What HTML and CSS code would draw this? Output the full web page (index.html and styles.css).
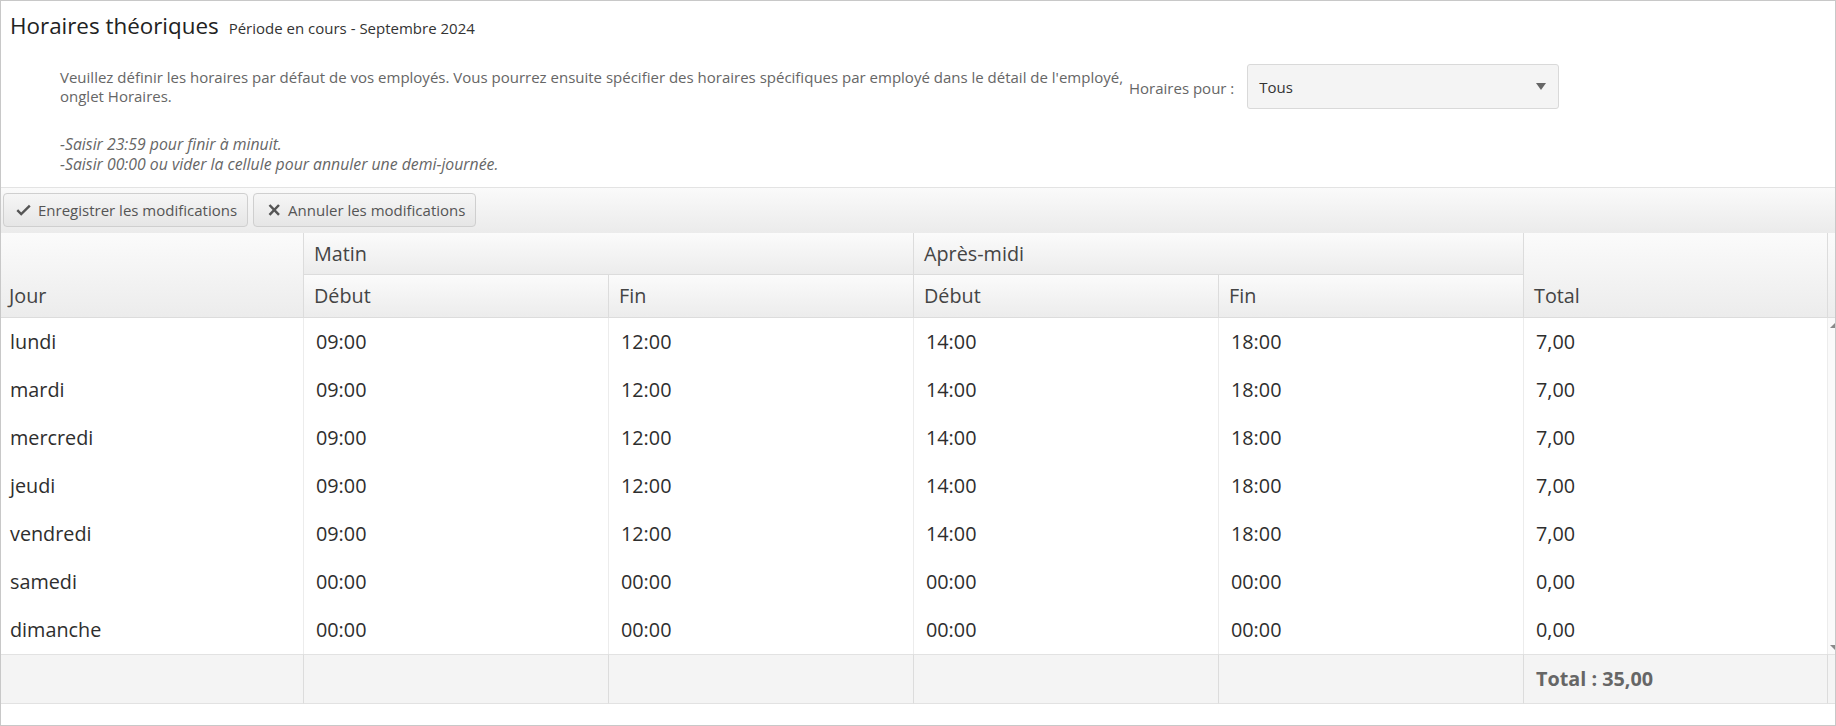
FILE: index.html
```html
<!DOCTYPE html>
<html lang="fr">
<head>
<meta charset="utf-8">
<title>Horaires théoriques</title>
<link rel="stylesheet" href="styles.css">
</head>
<body>
<div class="page">
  <header class="title-bar">
    <h1 class="title">Horaires théoriques</h1>
    <span class="period">Période en cours - Septembre 2024</span>
  </header>

  <div class="intro">
    <p class="desc">Veuillez définir les horaires par défaut de vos employés. Vous pourrez ensuite spécifier des horaires spécifiques par employé dans le détail de l'employé, onglet Horaires.</p>
    <span class="for-label">Horaires pour :</span>
    <div class="select">
      <span class="select-value">Tous</span>
      <svg class="select-arrow" width="10" height="7" viewBox="0 0 10 7"><polygon points="0,0 10,0 5,7" fill="#666"/></svg>
    </div>
  </div>

  <div class="notes">
    <p>-Saisir 23:59 pour finir à minuit.</p>
    <p>-Saisir 00:00 ou vider la cellule pour annuler une demi-journée.</p>
  </div>

  <div class="toolbar">
    <button class="btn" type="button">
      <svg class="ico" width="15" height="12" viewBox="0 0 15 12"><polyline points="1.3,6.2 5.2,10 13.8,1.6" fill="none" stroke="#555" stroke-width="2.4"/></svg>
      Enregistrer les modifications
    </button>
    <button class="btn btn-cancel" type="button">
      <svg class="ico" width="13" height="12" viewBox="0 0 13 12"><path d="M1.5 1 L11 10.8 M11 1 L1.5 10.8" fill="none" stroke="#555" stroke-width="2.5"/></svg>
      Annuler les modifications
    </button>
  </div>

  <div class="grid-wrap">
    <table class="grid">
      <colgroup>
        <col class="c-first"><col class="c-mid"><col class="c-mid"><col class="c-mid"><col class="c-mid"><col class="c-last">
      </colgroup>
      <thead>
        <tr class="hr1">
          <th rowspan="2" class="h-bottom first">Jour</th>
          <th colspan="2">Matin</th>
          <th colspan="2">Après-midi</th>
          <th rowspan="2" class="h-bottom">Total</th>
        </tr>
        <tr class="hr2">
          <th>Début</th><th>Fin</th><th>Début</th><th>Fin</th>
        </tr>
      </thead>
      <tbody>
        <tr><td class="first">lundi</td><td>09:00</td><td>12:00</td><td>14:00</td><td>18:00</td><td>7,00</td></tr>
        <tr><td class="first">mardi</td><td>09:00</td><td>12:00</td><td>14:00</td><td>18:00</td><td>7,00</td></tr>
        <tr><td class="first">mercredi</td><td>09:00</td><td>12:00</td><td>14:00</td><td>18:00</td><td>7,00</td></tr>
        <tr><td class="first">jeudi</td><td>09:00</td><td>12:00</td><td>14:00</td><td>18:00</td><td>7,00</td></tr>
        <tr><td class="first">vendredi</td><td>09:00</td><td>12:00</td><td>14:00</td><td>18:00</td><td>7,00</td></tr>
        <tr><td class="first">samedi</td><td>00:00</td><td>00:00</td><td>00:00</td><td>00:00</td><td>0,00</td></tr>
        <tr><td class="first">dimanche</td><td>00:00</td><td>00:00</td><td>00:00</td><td>00:00</td><td>0,00</td></tr>
      </tbody>
      <tfoot>
        <tr><td></td><td></td><td></td><td></td><td></td><td class="sum">Total : 35,00</td></tr>
      </tfoot>
    </table>
    <div class="gutter">
      <div class="g-head"></div>
      <div class="g-body">
        <svg width="5" height="5" viewBox="0 0 5 5"><polygon points="5,0 5,5 0,5" fill="#8a8a8a"/></svg>
        <svg width="5" height="5" viewBox="0 0 5 5"><polygon points="0,0 5,0 5,5" fill="#8a8a8a"/></svg>
      </div>
      <div class="g-foot"></div>
    </div>
  </div>
</div>
</body>
</html>
```

FILE: styles.css
```css
* { box-sizing: border-box; }

html, body {
  margin: 0;
  padding: 0;
  background: #fff;
}

body {
  font-family: "Open Sans", "Liberation Sans", sans-serif;
  color: #333;
}

.page {
  width: 1836px;
  height: 726px;
  border: 1px solid #c8c8c8;
  display: flex;
  flex-direction: column;
  overflow: hidden;
}

/* Title */
.title-bar {
  display: flex;
  align-items: baseline;
  gap: 10px;
  padding: 7px 9px 0;
  height: 43px;
}

.title {
  margin: 0;
  font-size: 22.4px;
  font-weight: 400;
  line-height: 36px;
  color: #222;
}

.period {
  font-size: 15px;
  color: #333;
}

/* Intro */
.intro {
  display: flex;
  align-items: center;
  margin-top: 20px;
  padding-left: 59px;
}

.desc {
  margin: 0;
  width: 1069px;
  font-size: 15px;
  line-height: 19px;
  color: #666;
}

.for-label {
  font-size: 15px;
  color: #666;
  margin-top: 3px;
}

.select {
  margin-left: 13px;
  width: 312px;
  height: 45px;
  border: 1px solid #d9d9d9;
  border-radius: 3px;
  background: #f4f4f4;
  display: flex;
  align-items: center;
  justify-content: space-between;
  padding: 0 12px 0 11px;
}

.select-value {
  font-size: 15px;
  color: #333;
}

/* Notes */
.notes {
  margin-top: 25px;
  padding-left: 59px;
  font-size: 15.8px;
  font-style: italic;
  color: #666;
  line-height: 20px;
}

.notes p { margin: 0; }

/* Toolbar */
.toolbar {
  margin-top: 13px;
  border-top: 1px solid #e3e3e3;
  background: linear-gradient(#fafafa, #ebebeb);
  padding: 5px 2px 6px;
  display: flex;
  gap: 5px;
}

.btn {
  height: 34px;
  display: flex;
  align-items: center;
  gap: 7px;
  padding: 0 10px 0 12px;
  border: 1px solid #cfcfcf;
  border-radius: 4px;
  background: linear-gradient(#f6f6f6, #e6e6e6);
  font-family: "Open Sans", "Liberation Sans", sans-serif;
  font-size: 15px;
  color: #555;
  cursor: pointer;
}

.btn-cancel { padding-left: 14px; }

.ico { flex: none; }

/* Grid */
.grid-wrap {
  display: flex;
}

.grid {
  width: 1827px;
  table-layout: fixed;
  border-collapse: separate;
  border-spacing: 0;
  font-size: 19.8px;
}

.c-first { width: 303px; }
.c-mid { width: 305px; }
.c-last { width: 304px; }

.grid th {
  font-weight: 400;
  text-align: left;
  color: #444;
  line-height: 26px;
  padding: 0 10px;
  vertical-align: middle;
  background: linear-gradient(#fbfbfb, #ececec);
  border-right: 1px solid #dcdcdc;
  border-bottom: 1px solid #dcdcdc;
}

.grid th.h-bottom {
  vertical-align: bottom;
  padding-bottom: 8px;
}

.grid th.first { padding-left: 8px; }

.hr1 { height: 42px; }
.hr2 { height: 43px; }

.grid td {
  padding: 0 12px;
  height: 48px;
  color: #2e2e2e;
  line-height: 26px;
  vertical-align: middle;
  border-right: 1px solid #ececec;
  white-space: nowrap;
}

.grid td.first { padding-left: 9px; }

.grid tfoot td {
  height: 50px;
  background: #f4f4f4;
  border-top: 1px solid #e2e2e2;
  border-bottom: 1px solid #e2e2e2;
  border-right: 1px solid #dcdcdc;
}

.grid tfoot td.sum {
  font-weight: 700;
  color: #666;
}

.gutter {
  width: 7px;
  display: flex;
  flex-direction: column;
}

.g-head {
  height: 85px;
  background: linear-gradient(#fbfbfb, #ececec);
  border-bottom: 1px solid #dcdcdc;
}

.g-body {
  height: 336px;
  background: #fafafa;
  display: flex;
  flex-direction: column;
  justify-content: space-between;
  align-items: flex-end;
  padding: 5px 0 4px;
}

.g-foot {
  height: 50px;
  background: #f4f4f4;
  border-top: 1px solid #e2e2e2;
  border-bottom: 1px solid #e2e2e2;
}
```
